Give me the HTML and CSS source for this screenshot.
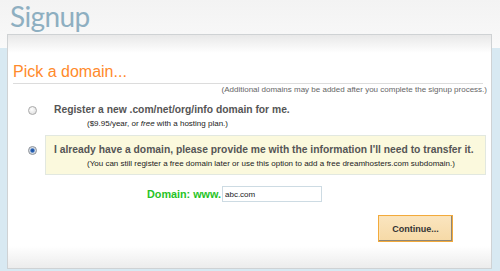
FILE: index.html
```html
<!DOCTYPE html>
<html>
<head>
<meta charset="utf-8">
<link rel="stylesheet" href="styles.css">
</head>
<body>
<div class="header"><h1 class="title">Signup</h1></div>
<div class="panel">
  <h2 class="heading">Pick a domain...</h2>
  <p class="note">(Additional domains may be added after you complete the signup process.)</p>
  <div class="option">
    <span class="radio"></span>
    <div class="opt-body">
      <div class="opt-main">Register a new .com/net/org/info domain for me.</div>
      <div class="opt-sub">($9.95/year, or <em>free</em> with a hosting plan.)</div>
    </div>
  </div>
  <div class="option">
    <span class="radio checked"></span>
    <div class="opt-body selected">
      <div class="opt-main">I already have a domain, please provide me with the information I'll need to transfer it.</div>
      <div class="opt-sub">(You can still register a free domain later or use this option to add a free dreamhosters.com subdomain.)</div>
    </div>
  </div>
  <div class="domain-row">
    <span class="domain-label">Domain: www.</span>
    <input class="domain-input" type="text" value="abc.com">
  </div>
  <div class="actions">
    <button class="continue" type="button">Continue...</button>
  </div>
</div>
</body>
</html>
```
FILE: styles.css
```css
html, body {
  margin: 0;
  padding: 0;
}
body {
  width: 500px;
  height: 271px;
  overflow: hidden;
  font-family: "Liberation Sans", Arial, sans-serif;
  background: linear-gradient(to bottom, #f3f3f3 0, #f8f8f8 40px, #fafafa 48px, #d8e9f2 48px, #d8e9f2 100%);
}
.header {
  height: 34px;
  padding: 1px 0 0 10px;
  box-sizing: border-box;
}
.title {
  margin: 0;
  font-family: Lato, "Open Sans", sans-serif;
  font-weight: 400;
  font-size: 28px;
  line-height: 30px;
  color: #8eafc1;
  letter-spacing: -0.6px;
}
.panel {
  box-sizing: border-box;
  margin-left: 7px;
  width: 485px;
  height: 235px;
  border: 1px solid #cfd2d4;
  background: linear-gradient(to bottom, #e8e8e8 0, #ffffff 18px, #ffffff calc(100% - 22px), #ececec 100%);
}
.heading {
  margin: 28px 8px 0 5px;
  padding-bottom: 2px;
  font-size: 16px;
  font-weight: 400;
  line-height: 18px;
  color: #ff8a2b;
  border-bottom: 1px solid #dcdcdc;
}
.note {
  margin: 0 4px 0 0;
  text-align: right;
  font-size: 8px;
  line-height: 11px;
  color: #666;
}
.option {
  display: flex;
  align-items: flex-start;
  margin-right: 5px;
}
.radio {
  box-sizing: border-box;
  flex: none;
  width: 9px;
  height: 9px;
  margin: 11px 8px 0 20px;
  border-radius: 50%;
  border: 1px solid #a9a9a9;
  background: radial-gradient(circle at 40% 35%, #ffffff 0, #e4e4e4 70%);
}
.radio.checked {
  border-color: #8a8f96;
  background: radial-gradient(circle, #1b4f9c 0, #2a64b8 1.6px, #cfd8e4 2.6px, #eeeeee 100%);
}
.opt-body {
  flex: 1;
  padding: 7px 8px 4px;
  border: 1px solid transparent;
}
.opt-body.selected {
  background: #fbf9dd;
  border-color: #e2e8e0;
}
.opt-main {
  font-size: 10.3px;
  font-weight: 700;
  line-height: 14px;
  color: #555;
  white-space: nowrap;
}
.opt-sub {
  margin-top: 1px;
  padding-left: 33px;
  font-size: 8px;
  line-height: 12px;
  color: #222;
  white-space: nowrap;
}
.domain-row {
  display: flex;
  align-items: center;
  margin: 11px 0 0 139px;
  height: 16px;
}
.domain-label {
  font-size: 10.8px;
  font-weight: 700;
  color: #26c326;
  margin-right: 1px;
}
.domain-input {
  box-sizing: border-box;
  width: 100px;
  height: 16px;
  margin: 0;
  padding: 0 2px;
  border: 1px solid #cddbe3;
  font-family: "Liberation Sans", Arial, sans-serif;
  font-size: 8px;
  color: #222;
  background: #fff;
  outline: none;
}
.actions {
  display: flex;
  justify-content: flex-end;
  margin: 13px 38px 0 0;
}
.continue {
  box-sizing: border-box;
  width: 75px;
  height: 27px;
  margin: 0;
  padding: 0;
  border: 1px solid #f2aa3c;
  box-shadow: inset -1px -1px 0 #8f8676, inset 1px 1px 0 #fbe3b8;
  background: linear-gradient(to bottom, #fae5bf 0, #f6d9a6 100%);
  font-family: "Liberation Sans", Arial, sans-serif;
  font-size: 9px;
  font-weight: 700;
  color: #333;
}
```
